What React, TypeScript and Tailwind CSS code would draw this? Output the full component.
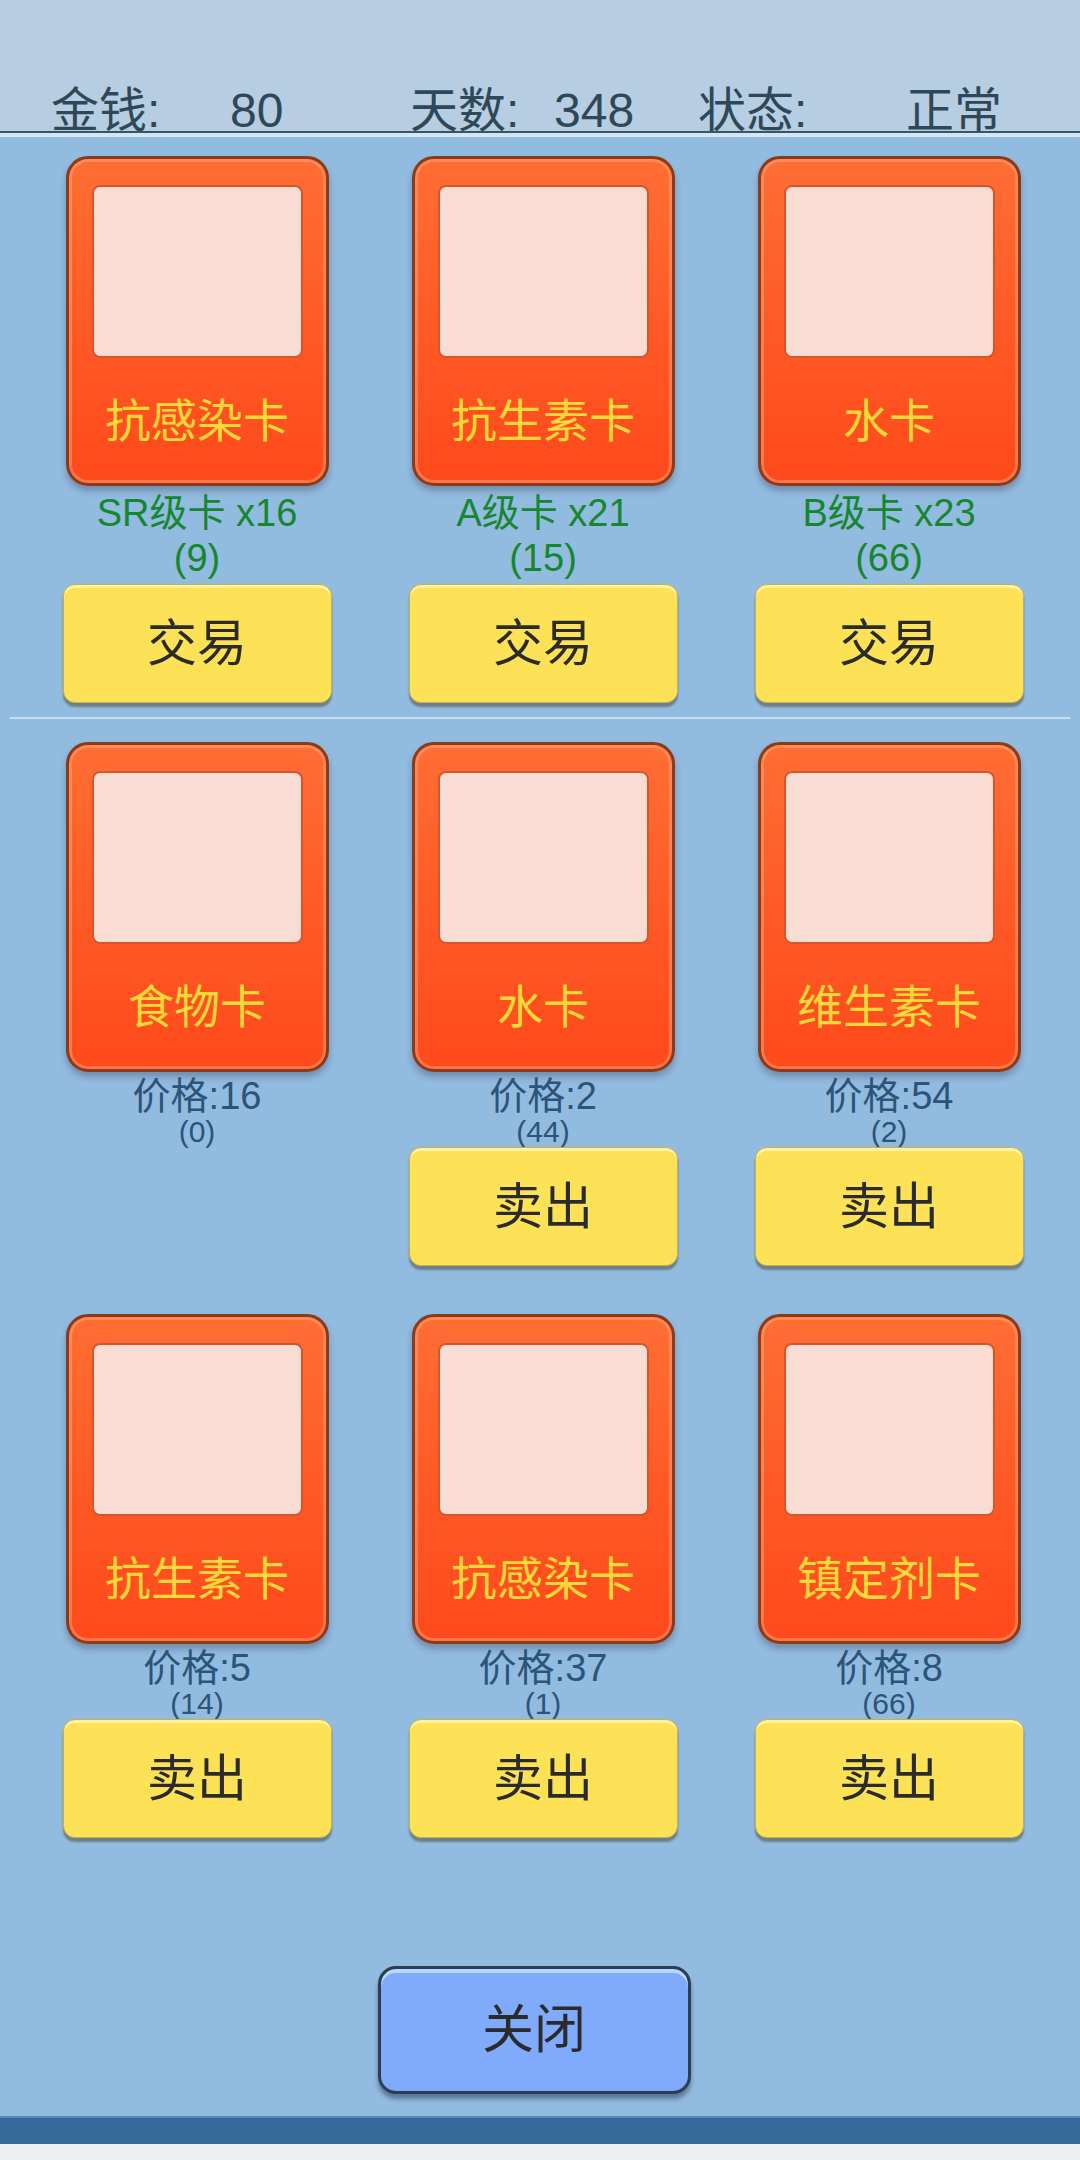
import React from 'react';

const FONT = { fontFamily: '"Liberation Sans", "Noto Sans CJK SC", sans-serif' };

interface CardProps {
  name: string;
}

const Card: React.FC<CardProps> = ({ name }) => (
  <div className="w-[263px] h-[330px] rounded-[22px] border-[3px] border-[#8a3c1a] bg-gradient-to-b from-[#ff6e34] via-[#ff5a26] to-[#ff4a1b] shadow-[inset_0_0_0_3px_rgba(255,170,130,0.45),0_5px_6px_rgba(40,40,60,0.3)] flex flex-col items-center">
    <div className="mt-[26px] w-[211px] h-[173px] rounded-[8px] border-2 border-[#d6562c] bg-[#f9ddd5]" />
    <div className="flex-1 flex items-center justify-center text-[46px] leading-none text-[#ffd83a]">{name}</div>
  </div>
);

const YellowButton: React.FC<{ label: string }> = ({ label }) => (
  <button className="w-[269px] h-[119px] rounded-[12px] border border-[#c7b054] bg-[#fde258] shadow-[inset_0_3px_0_rgba(255,250,200,0.7),0_4px_2px_rgba(80,80,60,0.55)] flex items-center justify-center text-[50px] leading-none text-[#2b2b2b]">
    {label}
  </button>
);

const shopCards = [
  { name: '抗感染卡', grade: 'SR级卡 x16', count: 9 },
  { name: '抗生素卡', grade: 'A级卡 x21', count: 15 },
  { name: '水卡', grade: 'B级卡 x23', count: 66 },
];

const myCards = [
  { name: '食物卡', price: 16, count: 0 },
  { name: '水卡', price: 2, count: 44 },
  { name: '维生素卡', price: 54, count: 2 },
  { name: '抗生素卡', price: 5, count: 14 },
  { name: '抗感染卡', price: 37, count: 1 },
  { name: '镇定剂卡', price: 8, count: 66 },
];

export default function App() {
  return (
    <div className="w-[1080px] h-[2160px] flex flex-col bg-[#92bbe0] overflow-hidden" style={FONT}>
      {/* top status */}
      <div className="h-[131px] bg-[#b6cde2] flex items-end pl-[51px] text-[48px] leading-[40px] text-[#2e4857]">
        <span className="w-[179px]">金钱:</span>
        <span className="w-[180px]">80</span>
        <span className="w-[144px]">天数:</span>
        <span className="w-[144px]">348</span>
        <span className="w-[208px]">状态:</span>
        <span>正常</span>
      </div>
      <div className="h-[2px] bg-[#3a5566]" />
      <div className="h-[4px] bg-[#d3e6f5]" />

      <div className="flex-1 flex flex-col">
        {/* shop row */}
        <div className="grid grid-cols-[346px_346px_346px] pl-[24px] pt-[19px]">
          {shopCards.map((c) => (
            <div key={c.grade} className="flex flex-col items-center">
              <Card name={c.name} />
              <div className="mt-[5px] text-[38px] leading-[45px] text-[#16862f] text-center">
                <div>{c.grade}</div>
                <div>({c.count})</div>
              </div>
              <div className="mt-[3px]">
                <YellowButton label="交易" />
              </div>
            </div>
          ))}
        </div>

        <div className="mt-[14px] mx-[10px] h-[2px] bg-[#c9def0]" />

        {/* own cards */}
        <div className="grid grid-cols-[346px_346px_346px] pl-[24px] pt-[23px] gap-y-[48px]">
          {myCards.map((c, i) => (
            <div key={c.name + i} className="flex flex-col items-center">
              <Card name={c.name} />
              <div className="mt-[5px] text-[38px] leading-[38px] text-[#2b5478] text-center">价格:{c.price}</div>
              <div className="mt-[2px] text-[30px] leading-[30px] text-[#2b5478] text-center">({c.count})</div>
              {i === 0 ? (
                <div className="h-[119px]" />
              ) : (
                <YellowButton label="卖出" />
              )}
            </div>
          ))}
        </div>

        <div className="flex-1 flex items-end justify-center pb-[22px] pr-[12px]">
          <button className="w-[313px] h-[128px] rounded-[18px] border-[3px] border-[#2b3e52] bg-[#80abfd] shadow-[inset_0_4px_0_rgba(200,225,255,0.8),0_5px_4px_rgba(30,40,60,0.45)] flex items-center justify-center text-[52px] leading-none text-[#2b2b2b]">
            关闭
          </button>
        </div>
      </div>

      <div className="h-[28px] bg-[#35699b] border-t-2 border-[#5a88b5]" />
      <div className="h-[16px] bg-[#eceff2]" />
    </div>
  );
}
